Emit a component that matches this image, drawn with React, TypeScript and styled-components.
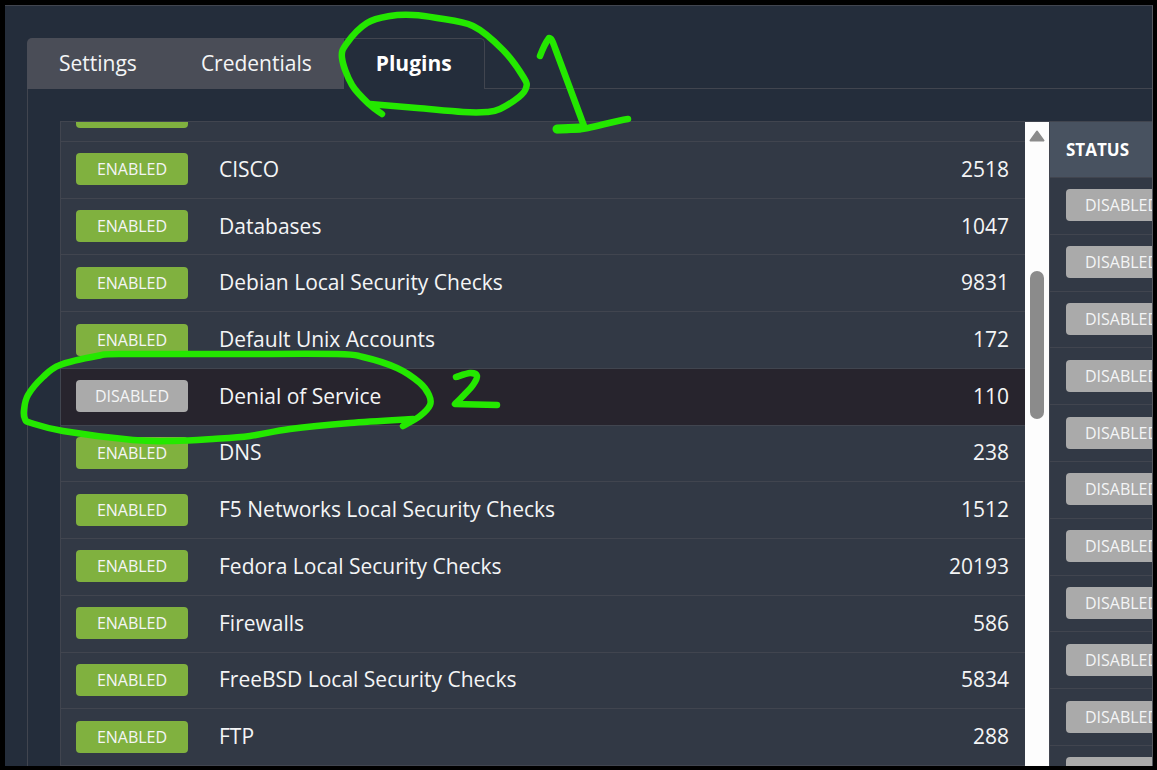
import React, { useState } from "react";
import styled, { createGlobalStyle, css } from "styled-components";

const color = {
  page: "#242d3b",
  line: "#41454f",
  tab: "#4a4d57",
  panel: "#323945",
  head: "#485260",
  selected: "#27242d",
  enabled: "#80b13f",
  disabled: "#aaaaaa",
  text: "#f4f5f6",
  ink: "#24e800",
};

const GlobalStyle = createGlobalStyle`
  *, *::before, *::after { box-sizing: border-box; }
  body {
    margin: 0;
    background: #000;
    color: ${color.text};
    font-family: "Open Sans", "Noto Sans", sans-serif;
    font-size: 21px;
    line-height: 28px;
  }
`;

const Frame = styled.div`
  position: relative;
  display: flex;
  min-height: 100vh;
  padding: 5px 4px 4px 5px;
  overflow: hidden;
`;

const Page = styled.main`
  flex: 1;
  min-width: 0;
  display: flex;
  flex-direction: column;
  padding: 32px 0 0 22px;
  background: ${color.page};
  border-top: 1px solid ${color.line};
  border-right: 1px solid #55585f;
`;

const Tabs = styled.div`
  display: flex;
  height: 51px;
`;

const Tab = styled.button<{ $active: boolean }>`
  padding: 0 32px 2px;
  border: 0;
  font: inherit;
  color: ${color.text};
  background: ${color.tab};
  cursor: pointer;

  &:first-child {
    border-top-left-radius: 5px;
  }

  ${({ $active }) =>
    $active &&
    css`
      font-weight: 700;
      color: #fff;
      background: ${color.page};
      border-top: 1px solid ${color.line};
      border-right: 1px solid ${color.line};
      border-top-right-radius: 5px;
    `}
`;

const TabsRule = styled.div`
  flex: 1;
  border-bottom: 1px solid ${color.line};
`;

const TabPanel = styled.div`
  flex: 1;
  display: flex;
  padding: 32px 0 0 32px;
  border-left: 1px solid ${color.line};
`;

const Lists = styled.div`
  flex: 1;
  min-width: 0;
  display: flex;
  border-top: 1px solid ${color.line};
  border-left: 1px solid ${color.line};
  background: ${color.panel};
`;

const FamilyTable = styled.table`
  flex: 1;
  min-width: 0;
  display: flex;
  flex-direction: column;
`;

const FamilyBody = styled.tbody`
  flex: 1;
  display: grid;
  grid-template-rows: 20px repeat(11, minmax(56px, 1fr));
`;

const FamilyRow = styled.tr<{ $selected?: boolean }>`
  display: grid;
  grid-template-columns: 143px 1fr 120px;
  align-items: center;
  padding: 0 16px 1px 15px;
  border-bottom: 1px solid ${color.line};
  background: ${({ $selected }) => ($selected ? color.selected : "transparent")};
`;

const ScrolledRow = styled(FamilyRow)`
  align-content: end;
  padding-bottom: 13px;
  overflow: hidden;
`;

const Cell = styled.td`
  display: block;
  padding: 0;
`;

const NameCell = styled(Cell)`
  padding-bottom: 1px;
`;

const CountCell = styled(NameCell)`
  text-align: right;
`;

const Badge = styled.button<{ $enabled: boolean }>`
  display: block;
  width: 112px;
  height: 32px;
  padding: 0;
  border: 0;
  border-radius: 4px;
  font: inherit;
  font-size: 16px;
  color: ${color.text};
  background: ${({ $enabled }) => ($enabled ? color.enabled : color.disabled)};
  cursor: pointer;
`;

const ScrollTrack = styled.div`
  width: 24px;
  display: flex;
  flex-direction: column;
  align-items: center;
  padding-top: 8px;
  background: #fdfdfd;
`;

const ScrollThumb = styled.div`
  width: 14px;
  height: 148px;
  margin-top: 129px;
  border-radius: 7px;
  background: #8b8b8b;
`;

const StatusTable = styled.table`
  width: 103px;
  display: flex;
  flex-direction: column;
  overflow: hidden;
  border-left: 1px solid ${color.line};
`;

const StatusHead = styled.thead`
  display: block;
`;

const StatusHeadRow = styled.tr`
  display: flex;
  align-items: center;
  height: 56px;
  padding-left: 16px;
  border-bottom: 1px solid ${color.line};
  background: ${color.head};
`;

const StatusTitle = styled.th`
  padding: 0;
  font-size: 17px;
  font-weight: 700;
  color: #fff;
`;

const StatusBody = styled.tbody`
  flex: 1;
  display: grid;
  grid-template-rows: repeat(10, minmax(56px, 1fr)) 20px;
`;

const StatusRow = styled.tr`
  display: flex;
  align-items: center;
  padding: 0 0 1px 16px;
  border-bottom: 1px solid ${color.line};

  &:last-child {
    align-items: flex-start;
    padding-top: 11px;
    border-bottom: 0;
    overflow: hidden;
  }
`;

const Ink = styled.svg`
  position: absolute;
  top: 0;
  left: 0;
  pointer-events: none;
`;

type Point = [number, number];

/* Joins the points of a pen stroke with a smooth Catmull-Rom curve. */
const smooth = (points: Point[]) =>
  points.slice(1).reduce((path, end, i) => {
    const start = points[i];
    const before = points[i - 1] ?? start;
    const after = points[i + 2] ?? end;
    const c1 = [start[0] + (end[0] - before[0]) / 6, start[1] + (end[1] - before[1]) / 6];
    const c2 = [end[0] - (after[0] - start[0]) / 6, end[1] - (after[1] - start[1]) / 6];
    return `${path} C${c1.join(" ")} ${c2.join(" ")} ${end.join(" ")}`;
  }, `M${points[0].join(" ")}`);

const tabLoop: Point[] = [
  [382, 114], [370, 105], [352, 85], [342, 58], [347, 43], [367, 23], [390, 16], [413, 15],
  [437, 18], [473, 26], [503, 50], [524, 78], [526, 88], [519, 97], [500, 109], [487, 112],
  [463, 112], [417, 108], [370, 104],
];

const rowLoop: Point[] = [
  [403, 426], [420, 416], [430, 405], [429, 395], [420, 383], [397, 368], [363, 357], [337, 354],
  [230, 354], [120, 354], [97, 356], [60, 365], [43, 377], [28, 395], [24, 410], [25, 419],
  [31, 423], [63, 431], [133, 440], [173, 441], [213, 439], [250, 436], [290, 429], [350, 423],
  [413, 419],
];

const two: Point[] = [[456, 377], [470, 373], [477, 376], [473, 385], [464, 395], [455, 404]];

const families: [string, number][] = [
  ["CISCO", 2518],
  ["Databases", 1047],
  ["Debian Local Security Checks", 9831],
  ["Default Unix Accounts", 172],
  ["Denial of Service", 110],
  ["DNS", 238],
  ["F5 Networks Local Security Checks", 1512],
  ["Fedora Local Security Checks", 20193],
  ["Firewalls", 586],
  ["FreeBSD Local Security Checks", 5834],
  ["FTP", 288],
];

const tabs = ["Settings", "Credentials", "Plugins"];

function StatusBadge({ initial, bare }: { initial: boolean; bare?: boolean }) {
  const [enabled, setEnabled] = useState(initial);
  const label = enabled ? "ENABLED" : "DISABLED";
  return (
    <Badge type="button" $enabled={enabled} aria-label={label} onClick={() => setEnabled(!enabled)}>
      {bare ? null : label}
    </Badge>
  );
}

export default function App() {
  const [active, setActive] = useState("Plugins");

  return (
    <>
      <GlobalStyle />
      <Frame>
        <Page>
          <Tabs role="tablist">
            {tabs.map((tab) => (
              <Tab
                key={tab}
                type="button"
                role="tab"
                aria-selected={tab === active}
                $active={tab === active}
                onClick={() => setActive(tab)}
              >
                {tab}
              </Tab>
            ))}
            <TabsRule />
          </Tabs>
          <TabPanel role="tabpanel">
            <Lists>
              <FamilyTable>
                <FamilyBody>
                  <ScrolledRow>
                    <Cell>
                      <StatusBadge initial bare />
                    </Cell>
                  </ScrolledRow>
                  {families.map(([name, count]) => {
                    const selected = name === "Denial of Service";
                    return (
                      <FamilyRow key={name} $selected={selected}>
                        <Cell>
                          <StatusBadge initial={!selected} />
                        </Cell>
                        <NameCell>{name}</NameCell>
                        <CountCell>{count}</CountCell>
                      </FamilyRow>
                    );
                  })}
                </FamilyBody>
              </FamilyTable>
              <ScrollTrack>
                <svg width="16" height="12" viewBox="0 0 16 12" aria-hidden="true">
                  <path d="M8 1.5 14.5 10.5H1.5Z" fill="#8b8b8b" stroke="#8b8b8b" strokeWidth="2" strokeLinejoin="round" />
                </svg>
                <ScrollThumb />
              </ScrollTrack>
              <StatusTable>
                <StatusHead>
                  <StatusHeadRow>
                    <StatusTitle scope="col">STATUS</StatusTitle>
                  </StatusHeadRow>
                </StatusHead>
                <StatusBody>
                  {Array.from({ length: 11 }, (_, i) => (
                    <StatusRow key={i}>
                      <Cell>
                        <StatusBadge initial={false} bare={i === 10} />
                      </Cell>
                    </StatusRow>
                  ))}
                </StatusBody>
              </StatusTable>
            </Lists>
          </TabPanel>
        </Page>
        <Ink
          width="640"
          height="460"
          viewBox="0 0 640 460"
          fill="none"
          stroke={color.ink}
          strokeWidth="6.5"
          strokeLinecap="round"
          strokeLinejoin="round"
          aria-hidden="true"
        >
          <path d={smooth(tabLoop)} />
          <path d="M540 56 C543 48 546 42 549 38 C552 38 553 43 555 48 L584 126" />
          <path d="M557 130 C570 130 578 130 588 128 C602 125 615 121 628 119" />
          <path d="M557 129 L580 128" strokeWidth="9" />
          <path d={smooth(rowLoop)} />
          <path d={`${smooth(two)} L497 405`} />
        </Ink>
      </Frame>
    </>
  );
}
